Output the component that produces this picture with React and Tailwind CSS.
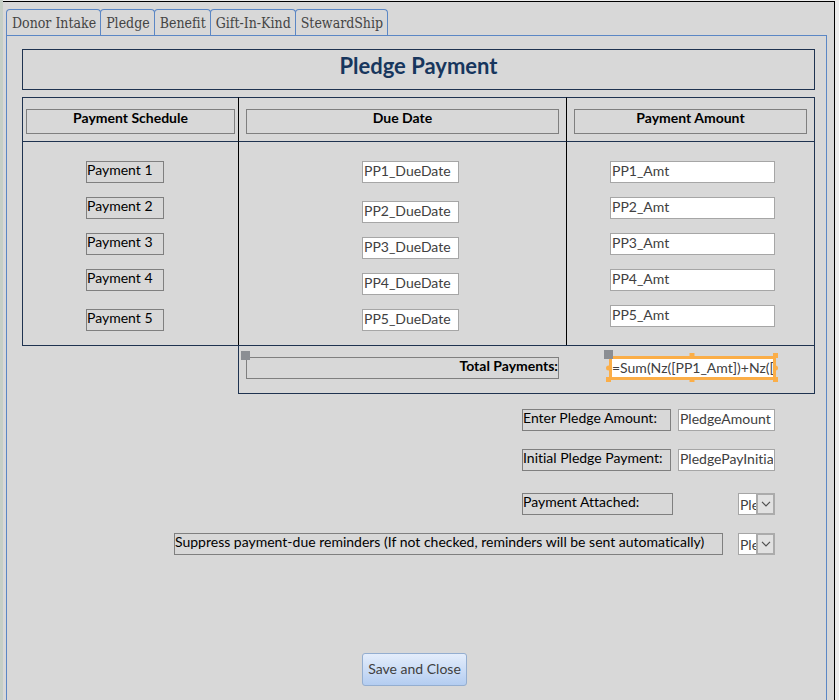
import React, { useState } from "react";

const tabs = ["Donor Intake", "Pledge", "Benefit", "Gift-In-Kind", "StewardShip"];

// low* marks cells that sit a step lower than the rest of their row
const payments = [
  { id: 1 },
  { id: 2, lowDate: true },
  { id: 3, lowDate: true },
  { id: 4, lowDate: true },
  { id: 5, lowLabel: true, lowDate: true },
];

const labelBox = "block h-[22px] border border-[#7f7f7f] text-black leading-4 whitespace-nowrap";
const inputBox = "block h-[22px] border border-[#a6a6a6] bg-white px-px pb-1 text-[#404040] outline-none";

function HeaderCell({ children, className }) {
  return (
    <th className={`border-t border-l border-t-[#1f3350] pt-[11px] pb-[7px] font-bold ${className}`}>
      <div className="h-[25px] border border-[#7f7f7f] leading-4 text-black">{children}</div>
    </th>
  );
}

function MoveHandle() {
  return <span className="absolute -left-[5px] -top-[6px] h-[9px] w-[9px] bg-[#8b8e93]" />;
}

function SmallSelect({ id, value }) {
  return (
    <div className="relative w-[37px]">
      <select id={id} className={`${inputBox} w-full appearance-none pr-[18px]`}>
        <option>{value}</option>
      </select>
      <span className="pointer-events-none absolute right-0 top-0 flex h-[22px] w-[19px] items-center justify-center border-2 border-[#ababab] bg-[#e1e1e1]">
        <svg width="10" height="6" viewBox="0 0 10 6" fill="none" stroke="#505050" strokeWidth="1.2">
          <path d="M1 0.8 L5 4.8 L9 0.8" />
        </svg>
      </span>
    </div>
  );
}

function SelectionHandles() {
  return (
    <>
      <span className="absolute -top-[3px] left-1/2 h-[5px] w-[5px] -translate-x-1/2 bg-[#fbae48]" />
      <span className="absolute -right-[2px] -top-[3px] h-[5px] w-[5px] bg-[#fbae48]" />
      <span className="absolute -left-[3px] top-1/2 h-[5px] w-[5px] -translate-y-1/2 rounded-full bg-[#fbae48]" />
      <span className="absolute -right-[2px] top-1/2 h-[5px] w-[5px] -translate-y-1/2 rounded-full bg-[#fbae48]" />
      <span className="absolute -bottom-[2px] -left-[3px] h-[5px] w-[5px] bg-[#fbae48]" />
      <span className="absolute -bottom-[2px] left-1/2 h-[5px] w-[5px] -translate-x-1/2 bg-[#fbae48]" />
      <span className="absolute -bottom-[2px] -right-[2px] h-[5px] w-[5px] bg-[#fbae48]" />
    </>
  );
}

function PaymentTable() {
  return (
    <table className="mt-[7px] w-full table-fixed border-separate border-spacing-0">
      <colgroup>
        <col className="w-[27.24%]" />
        <col className="w-[41.36%]" />
        <col className="w-[31.4%]" />
      </colgroup>
      <thead>
        <tr>
          <HeaderCell className="border-l-[#1f3350] px-[3px]">Payment Schedule</HeaderCell>
          <HeaderCell className="border-l-black px-[7px]">Due Date</HeaderCell>
          <HeaderCell className="border-l-black border-r border-r-[#1f3350] px-[7px]">Payment Amount</HeaderCell>
        </tr>
      </thead>
      <tbody>
        {payments.map((p, i) => {
          const edge = i === 0 ? "h-14 border-t border-t-[#1f3350]" : i === 4 ? "h-10" : "h-9";
          const pad = (low) => (i === 0 ? "pt-[19px]" : low ? "pt-1" : "pt-0");
          return (
            <tr key={p.id} className="align-top">
              <td className={`${edge} ${pad(p.lowLabel)} border-l border-l-[#1f3350] pl-[63px]`}>
                <label htmlFor={`date${p.id}`} className={`${labelBox} w-[78px]`}>
                  Payment {p.id}
                </label>
              </td>
              <td className={`${edge} ${pad(p.lowDate)} border-l border-l-black pl-[123px]`}>
                <input
                  id={`date${p.id}`}
                  aria-label={`Payment ${p.id} due date`}
                  defaultValue={`PP${p.id}_DueDate`}
                  className={`${inputBox} w-[97px]`}
                />
              </td>
              <td className={`${edge} ${pad(false)} border-x border-l-black border-r-[#1f3350] pl-[43px] pr-[39px]`}>
                <input
                  aria-label={`Payment ${p.id} amount`}
                  defaultValue={`PP${p.id}_Amt`}
                  className={`${inputBox} w-full`}
                />
              </td>
            </tr>
          );
        })}
      </tbody>
      <tfoot>
        <tr className="align-top">
          <td className="border-t border-[#1f3350]"></td>
          <td className="h-[49px] border-y border-l border-[#1f3350] px-[7px] pt-[11px]">
            <div className="relative">
              <label htmlFor="total" className={`${labelBox} text-right font-bold`}>
                Total Payments:
              </label>
              <MoveHandle />
            </div>
          </td>
          <td className="border-y border-r border-[#1f3350] pl-[43px] pr-[38px] pt-[10px]">
            <div className="relative">
              <input
                id="total"
                defaultValue="=Sum(Nz([PP1_Amt])+Nz([PP2_Amt])+Nz([PP3_Amt])+Nz([PP4_Amt])+Nz([PP5_Amt]))"
                className="block h-6 w-full border-[3px] border-[#fbae48] bg-white pb-0.5 text-[#404040] outline-none"
              />
              <SelectionHandles />
              <MoveHandle />
            </div>
          </td>
        </tr>
      </tfoot>
    </table>
  );
}

function App() {
  const [activeTab, setActiveTab] = useState("Pledge");

  return (
    <div className="flex min-h-screen border-l-3 border-[#c6cfc6] bg-[#ececec] pt-px pr-1 font-[Lato,sans-serif] text-[14px] [font-variant-ligatures:none]">
      <div className="flex min-w-0 grow flex-col border-t border-r border-black bg-[#d8d8d8] pl-[3px] pr-[7px] pt-[7px]">
        {/* Tabs */}
        <div role="tablist" className="flex font-['DejaVu_Serif_Condensed','DejaVu_Serif',serif] text-[14px]">
          {tabs.map((tab) => (
            <button
              key={tab}
              role="tab"
              aria-selected={activeTab === tab}
              onClick={() => setActiveTab(tab)}
              className="-mr-px h-[26px] rounded-t border border-b-0 border-[#5b87c5] pl-[5px] pr-1 pt-0.5 text-[#444444]"
            >
              {tab}
            </button>
          ))}
        </div>

        {/* Tab page */}
        <div className="grow border border-b-0 border-[#5b87c5] pl-[15px] pr-[11px] pt-[13px]">
          <h1 className="h-[41px] border border-[#1f3350] text-center text-[22px] leading-8 font-bold text-[#17365d]">
            Pledge Payment
          </h1>

          <PaymentTable />

          {/* Pledge details */}
          <div className="mt-[15px] flex flex-col gap-[18px] pr-10">
            <div className="flex justify-end gap-[7px]">
              <label htmlFor="amount" className={`${labelBox} w-[149px]`}>Enter Pledge Amount:</label>
              <input id="amount" defaultValue="PledgeAmount" className={`${inputBox} w-[97px]`} />
            </div>
            <div className="flex justify-end gap-[7px]">
              <label htmlFor="initial" className={`${labelBox} w-[149px]`}>Initial Pledge Payment:</label>
              <input id="initial" defaultValue="PledgePayInitial" className={`${inputBox} w-[97px]`} />
            </div>
            <div className="flex justify-end gap-[65px] pt-1">
              <label htmlFor="attached" className={`${labelBox} w-[151px]`}>Payment Attached:</label>
              <SmallSelect id="attached" value="PledgePayAttached" />
            </div>
            <div className="flex justify-end gap-[15px]">
              <label htmlFor="suppress" className={`${labelBox} w-[549px]`}>
                Suppress payment-due reminders (If not checked, reminders will be sent automatically)
              </label>
              <SmallSelect id="suppress" value="PledgePaySuppress" />
            </div>
          </div>

          <div className="mt-[98px] flex justify-center pr-2">
            <button className="h-[33px] w-[105px] rounded-[3px] border border-[#94aed0] bg-linear-to-b from-[#e4edfb] to-[#b4cdf1] pb-0.5 text-[#404040]">
              Save and Close
            </button>
          </div>
        </div>
      </div>
    </div>
  );
}

export default App;
